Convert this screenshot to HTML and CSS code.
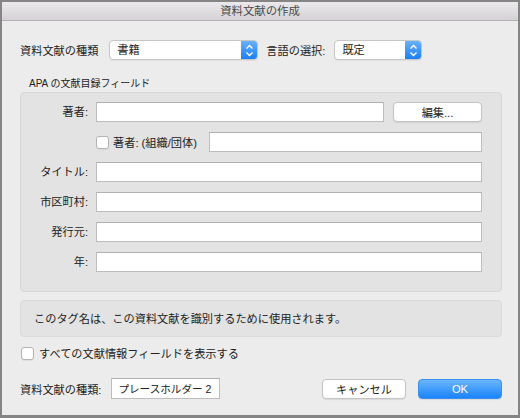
FILE: index.html
```html
<!DOCTYPE html>
<html lang="ja">
<head>
<meta charset="utf-8">
<title>資料文献の作成</title>
<link rel="stylesheet" href="styles.css">
</head>
<body>
<div class="window">
  <div class="titlebar">資料文献の作成</div>
  <div class="content">
    <div class="toprow">
      <span class="label">資料文献の種類</span>
      <div class="select sel-type">
        <span class="sel-text">書籍</span>
        <span class="stepper"><svg width="9" height="13" viewBox="0 0 9 13"><path d="M1.5 4.5 L4.5 1.5 L7.5 4.5 M1.5 8.5 L4.5 11.5 L7.5 8.5" fill="none" stroke="#fff" stroke-width="1.4"/></svg></span>
      </div>
      <span class="label lang-label">言語の選択:</span>
      <div class="select sel-lang">
        <span class="sel-text">既定</span>
        <span class="stepper"><svg width="9" height="13" viewBox="0 0 9 13"><path d="M1.5 4.5 L4.5 1.5 L7.5 4.5 M1.5 8.5 L4.5 11.5 L7.5 8.5" fill="none" stroke="#fff" stroke-width="1.4"/></svg></span>
      </div>
    </div>

    <div class="group-title">APA の文献目録フィールド</div>
    <div class="group">
      <span class="flabel">著者:</span>
      <div class="fcell">
        <input class="field grow" type="text">
        <button class="btn edit-btn">編集...</button>
      </div>
      <span class="flabel"></span>
      <div class="fcell">
        <span class="check"></span>
        <span class="check-text">著者: (組織/団体)</span>
        <input class="field grow org-field" type="text">
      </div>
      <span class="flabel">タイトル:</span>
      <div class="fcell"><input class="field grow" type="text"></div>
      <span class="flabel">市区町村:</span>
      <div class="fcell"><input class="field grow" type="text"></div>
      <span class="flabel">発行元:</span>
      <div class="fcell"><input class="field grow" type="text"></div>
      <span class="flabel">年:</span>
      <div class="fcell"><input class="field grow" type="text"></div>
    </div>

    <div class="info">このタグ名は、この資料文献を識別するために使用されます。</div>

    <div class="showall">
      <span class="check"></span>
      <span class="showall-text">すべての文献情報フィールドを表示する</span>
    </div>

    <div class="bottomrow">
      <span class="label">資料文献の種類:</span>
      <input class="field tag-field" type="text" value="プレースホルダー 2">
      <div class="spacer"></div>
      <button class="btn cancel-btn">キャンセル</button>
      <button class="btn ok-btn">OK</button>
    </div>
  </div>
</div>
</body>
</html>
```

FILE: styles.css
```css
* { box-sizing: border-box; }
html, body {
  margin: 0;
  padding: 0;
  width: 520px;
  height: 418px;
  overflow: hidden;
  background: #858585;
}
body {
  font-family: "Liberation Sans", "Noto Sans CJK JP", sans-serif;
  font-size: 11.2px;
  color: #222;
}
.window {
  width: 520px;
  height: 418px;
  border: 2px solid #858585;
  border-bottom-width: 3px;
  background: #ececec;
  display: flex;
  flex-direction: column;
}
.titlebar {
  height: 19px;
  flex: none;
  background: linear-gradient(#ebe9eb, #d4d2d4);
  border-bottom: 1px solid #b2b2b2;
  text-align: center;
  font-size: 11.4px;
  line-height: 18px;
  color: #4a4a4a;
}
.content {
  padding: 19px 16px 0 18px;
  display: flex;
  flex-direction: column;
}
.toprow {
  display: flex;
  align-items: center;
  height: 20px;
}
.label { white-space: nowrap; }
.select {
  height: 20px;
  display: flex;
  background: #fff;
  border: 1px solid #c6c6c6;
  border-radius: 4px;
  box-shadow: 0 1px 1px rgba(0,0,0,0.06);
  overflow: hidden;
}
.sel-type { width: 149px; margin-left: 11px; }
.sel-lang { width: 88px; margin-left: 9px; }
.lang-label { margin-left: 8px; }
.sel-text {
  flex: 1;
  padding-left: 7px;
  line-height: 18px;
}
.stepper {
  width: 16px;
  background: linear-gradient(#69b1fa, #1b7ff5);
  display: flex;
  align-items: center;
  justify-content: center;
}
.group-title {
  margin-top: 17px;
  margin-left: 9px;
  font-size: 10px;
  line-height: 14px;
  height: 14px;
}
.group {
  margin-top: 1px;
  height: 200px;
  background: #e3e3e3;
  border: 1px solid #d6d6d6;
  border-radius: 4px;
  padding: 9px 19px 0 0;
  display: grid;
  grid-template-columns: 67px 1fr;
  grid-auto-rows: 20px;
  column-gap: 8px;
  row-gap: 10px;
}
.flabel {
  text-align: right;
  line-height: 20px;
  white-space: nowrap;
}
.fcell {
  display: flex;
  align-items: center;
  height: 20px;
}
.field {
  height: 20px;
  border: 1px solid #bdbdbd;
  border-top-color: #b0b0b0;
  background: #fff;
  font: inherit;
  color: #222;
  padding: 0 6px;
  margin: 0;
  outline: none;
  border-radius: 0;
}
.grow { flex: 1; min-width: 0; }
.btn {
  font: inherit;
  height: 20px;
  margin: 0;
  padding: 0;
  background: #fff;
  border: 1px solid #c3c3c3;
  border-radius: 4px;
  box-shadow: 0 1px 1px rgba(0,0,0,0.08);
  color: #222;
}
.edit-btn { width: 89px; margin-left: 9px; }
.check {
  width: 13px;
  height: 13px;
  flex: none;
  background: #fff;
  border: 1px solid #b3b3b3;
  border-radius: 3px;
  box-shadow: 0 1px 1px rgba(0,0,0,0.05);
}
.check-text { margin-left: 4px; white-space: nowrap; }
.org-field { margin-left: 12px; }
.info {
  margin-top: 8px;
  height: 37px;
  background: #e3e3e3;
  border: 1px solid #dadada;
  border-radius: 4px;
  padding-left: 13px;
  line-height: 37px;
}
.showall {
  margin-top: 9px;
  display: flex;
  align-items: center;
  height: 14px;
  padding-left: 1px;
}
.showall-text { margin-left: 5px; }
.bottomrow {
  margin-top: 18px;
  display: flex;
  align-items: center;
  height: 21px;
}
.tag-field {
  width: 109px;
  height: 21px;
  margin-left: 10px;
  padding: 0 3px 0 6px;
  font-size: 10.6px;
}
.spacer { flex: 1; }
.cancel-btn { width: 84px; }
.ok-btn {
  width: 84px;
  margin-left: 12px;
  background: linear-gradient(#6bb6fb, #1b83fa);
  border-color: #3b8ff0;
  color: #fff;
}
```
